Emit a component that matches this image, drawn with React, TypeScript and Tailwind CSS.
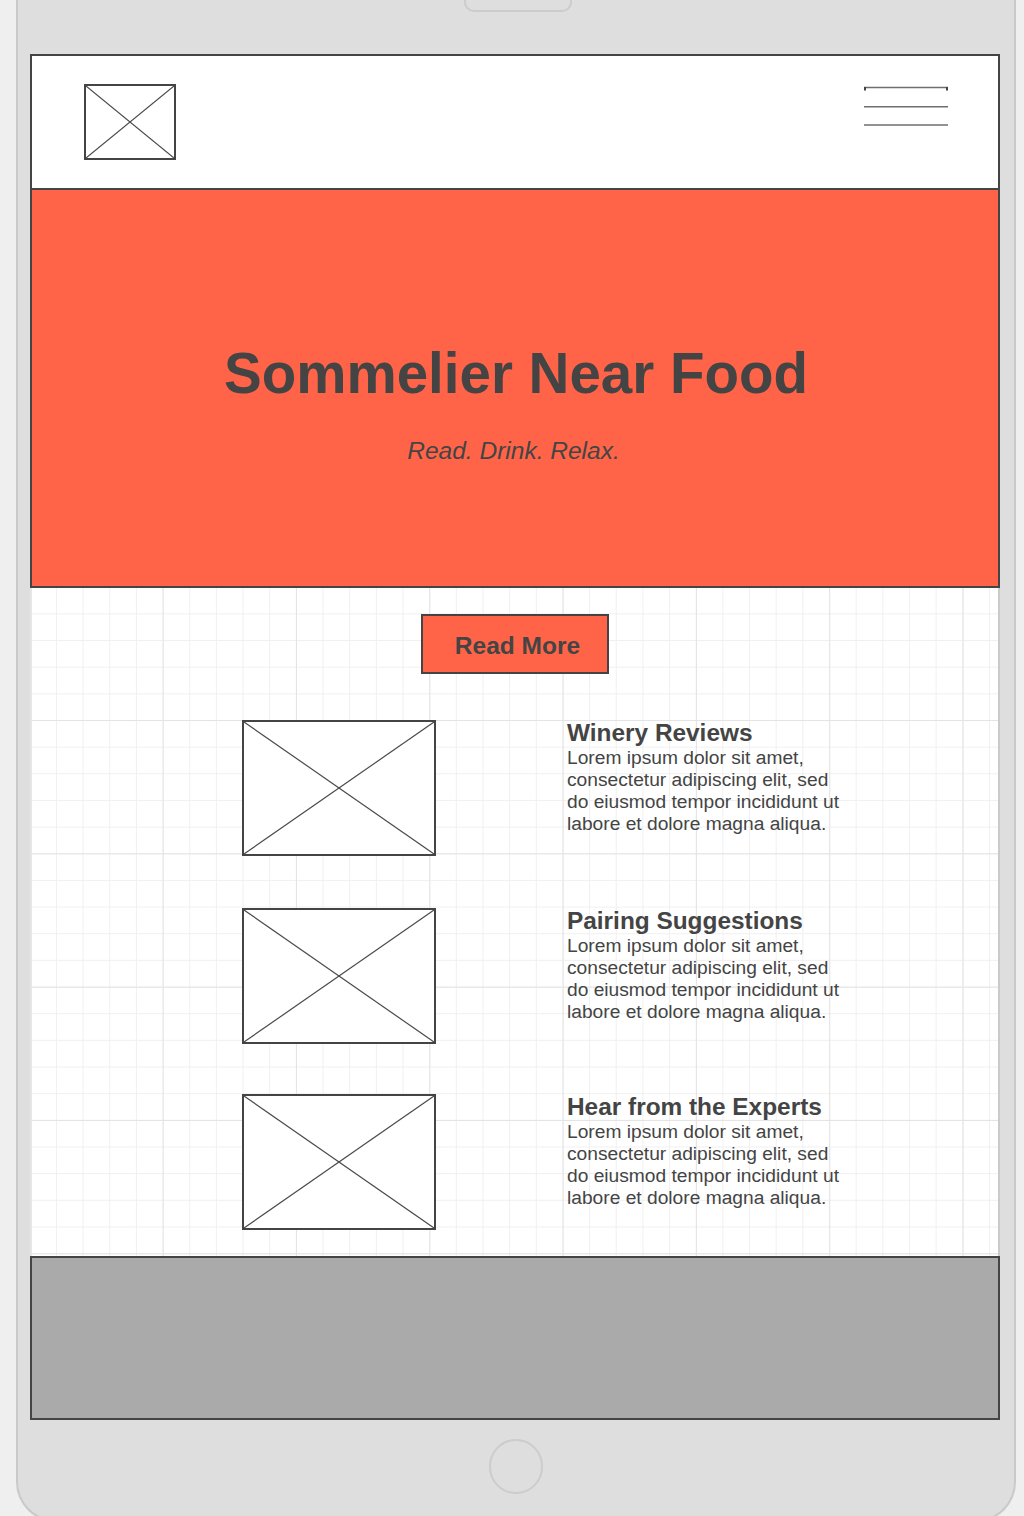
import React from "react";

function Placeholder({ className }: { className: string }) {
  return (
    <div className={`border-2 border-[#444444] bg-white ${className}`}>
      <svg className="block h-full w-full" viewBox="0 0 100 100" preserveAspectRatio="none">
        <line x1="0" y1="0" x2="100" y2="100" stroke="#4a4a4a" strokeWidth="1.2" vectorEffect="non-scaling-stroke" />
        <line x1="100" y1="0" x2="0" y2="100" stroke="#4a4a4a" strokeWidth="1.2" vectorEffect="non-scaling-stroke" />
      </svg>
    </div>
  );
}

const cards = [
  { title: "Winery Reviews" },
  { title: "Pairing Suggestions" },
  { title: "Hear from the Experts" },
];

export default function App() {
  return (
    <div
      className="h-[1516px] w-[1024px] overflow-hidden bg-[#efefef] text-[#444444]"
      style={{ fontFamily: '"Liberation Sans", Arial, sans-serif' }}
    >
      <div className="ml-[16px] flex h-[1522px] w-[1000px] flex-col rounded-b-[40px] border-x-2 border-b-2 border-[#c9c9c9] bg-[#dedede]">
        {/* top notch */}
        <div className="ml-[446px] h-[12px] w-[108px] rounded-b-[10px] border-x-2 border-b-2 border-[#cccccc]" />

        {/* screen */}
        <div className="ml-[12px] mt-[42px] w-[970px]">
          {/* header */}
          <div className="flex h-[136px] items-start justify-between border-2 border-[#444444] bg-white">
            <Placeholder className="ml-[52px] mt-[28px] h-[76px] w-[92px]" />
            <svg className="mr-[49px] mt-[29px]" width="86" height="42" viewBox="0 0 86 42">
              <line x1="1" y1="2.5" x2="85" y2="2.5" stroke="#6e6e6e" strokeWidth="1.6" />
              <rect x="1" y="2" width="2" height="3.5" fill="#444444" />
              <rect x="83" y="2" width="2" height="3.5" fill="#444444" />
              <line x1="1" y1="21.7" x2="85" y2="21.7" stroke="#6e6e6e" strokeWidth="1.6" />
              <line x1="1" y1="40" x2="85" y2="40" stroke="#6e6e6e" strokeWidth="1.6" />
            </svg>
          </div>

          {/* hero */}
          <div className="flex h-[398px] flex-col items-center border-x-2 border-b-2 border-[#444444] bg-[#ff6449] pt-[156px]">
            <h1 className="pl-[2px] text-[56.5px] font-bold leading-[56px]">Sommelier Near Food</h1>
            <p className="mt-[37px] pr-[3px] text-[24.5px] italic leading-[24px]">Read. Drink. Relax.</p>
          </div>

          {/* grid content */}
          <div className="flex flex-col items-center border-l-2 border-r-2 border-l-[#e6e6e6] border-r-[#cacaca] bg-white pb-[26px] pt-[26px] [background-image:linear-gradient(to_right,#e4e4e4_1px,transparent_1px),linear-gradient(to_bottom,#e4e4e4_1px,transparent_1px),linear-gradient(to_right,#f0f0f0_1px,transparent_1px),linear-gradient(to_bottom,#f0f0f0_1px,transparent_1px)] [background-size:133.333px_133.333px,133.333px_133.333px,26.667px_26.667px,26.667px_26.667px] [background-position:-2.7px_-1.3px]">
            <button className="flex h-[60px] w-[188px] items-center justify-center border-2 border-[#444444] bg-[#ff6449] pl-[5px] pt-[3px] text-[24.5px] font-bold leading-[24px] text-[#444444]">
              Read More
            </button>

            <div className="mt-[46px] flex w-full flex-col gap-[51px] pl-[210px]">
              {cards.map((c, i) => (
                <div key={c.title} className={`flex h-[136px] items-start ${i === 1 ? "mt-[1px] -mb-[1px]" : ""}`}>
                  <Placeholder className="h-[136px] w-[194px] shrink-0" />
                  <div className="ml-[131px] mt-[1px] w-[282px]">
                    <h2 className="text-[24.4px] font-bold leading-[24px]">{c.title}</h2>
                    <p className="mt-[2px] text-[19.2px] leading-[22px]">
                      Lorem ipsum dolor sit amet, consectetur adipiscing elit, sed do eiusmod tempor incididunt ut labore et dolore magna aliqua.
                    </p>
                  </div>
                </div>
              ))}
            </div>
          </div>

          {/* footer */}
          <div className="h-[164px] border-2 border-[#444444] bg-[#aaaaaa]" />
        </div>

        {/* home button */}
        <div className="ml-[471px] mt-[19px] h-[55px] w-[54px] rounded-full border-2 border-[#cccccc]" />
      </div>
    </div>
  );
}
